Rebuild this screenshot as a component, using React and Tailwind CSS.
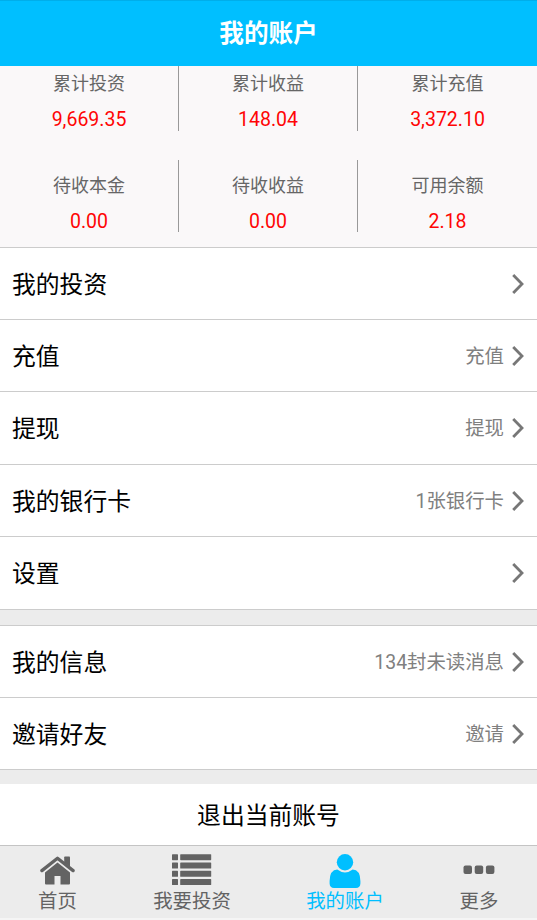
const stats = [
  [
    { label: '累计投资', value: '9,669.35' },
    { label: '累计收益', value: '148.04' },
    { label: '累计充值', value: '3,372.10' },
  ],
  [
    { label: '待收本金', value: '0.00' },
    { label: '待收收益', value: '0.00' },
    { label: '可用余额', value: '2.18' },
  ],
];

const Stat = ({ label, value, className }) => (
  <div className={`text-center border-[#999] ${className}`}>
    <div className="text-[18px] leading-6 text-[#666]">{label}</div>
    <div className="mt-3 text-[19.5px] leading-6 text-[#ff0505]">{value}</div>
  </div>
);

const Row = ({ title, note, className = 'h-[72px]' }) => (
  <a href="#" className={`flex items-center justify-between pl-3 pr-[13px] bg-white border-b border-[#ccc] ${className}`}>
    <span className="pt-0.5 text-[23.8px] leading-8 text-black">{title}</span>
    <span className="flex items-center text-[19.4px] leading-8 text-[#808080]">
      <span className="pt-0.5">{note}</span>
      <svg className="w-3 h-5 ml-2" viewBox="0 0 12 20" fill="none" stroke="#777" strokeWidth="2.8">
        <path d="M1.2 1L10 10l-8.8 9" />
      </svg>
    </span>
  </a>
);

const HomeIcon = () => (
  <svg className="w-9 h-[34px]" viewBox="0 0 36 34" fill="#636363">
    <path d="M24.200 3.300q0-.8.800-.8h4.200q.8 0 .8.800V13l-5.800-4.800z" />
    <path d="M1.900 16.600L17.500 4.200l15.600 12.400" fill="none" stroke="#636363" strokeWidth="3.300" strokeLinecap="round" strokeLinejoin="round" />
    <path d="M5 18.600L17.500 8.600 30 18.600V29.500q0 1-1 1h-8.500V22h-6v8.500H6q-1 0-1-1z" />
  </svg>
);

const ListIcon = () => (
  <svg className="w-10 h-[34px]" viewBox="0 0 40 34" fill="#636363">
    {[0.2, 8.500, 16.800, 25.100].map((y) => (
      <g key={y}>
        <rect x="0" y={y} width="6" height="6" rx="0.600" />
        <rect x="8.200" y={y} width="31" height="6" rx="0.600" />
      </g>
    ))}
  </svg>
);

const UserIcon = () => (
  <svg className="w-8 h-[34px]" viewBox="0 0 32 34" fill="#00bfff">
    <circle cx="16" cy="8.300" r="8.200" />
    <path d="M8.300 15.600Q.8 16 .6 27v2.600Q.8 34 5 34h22q4.200 0 4.400-4.400V27q-.2-11-7.700-11.400-3.700 2.900-7.700 2.900t-7.700-2.900z" />
  </svg>
);

const MoreIcon = () => (
  <svg className="w-8 h-[34px]" viewBox="0 0 32 34" fill="#636363">
    <rect x="0.500" y="11.500" width="8.500" height="8.500" rx="2" />
    <rect x="11.700" y="11.500" width="8.500" height="8.500" rx="2" />
    <rect x="22.900" y="11.500" width="8.500" height="8.500" rx="2" />
  </svg>
);

const tabs = [
  { label: '首页', icon: HomeIcon, width: 'w-[115px]' },
  { label: '我要投资', icon: ListIcon, width: 'w-[154px]' },
  { label: '我的账户', icon: UserIcon, width: 'w-[152px]', active: true },
  { label: '更多', icon: MoreIcon, width: 'w-[116px]' },
];

const App = () => {
  return (
    <div className="w-full h-[920px] flex flex-col overflow-hidden bg-[#ececec] font-[Roboto,'Noto_Sans_CJK_SC',sans-serif]">
      {/* Header */}
      <header className="h-[66px] shrink-0 flex items-center justify-center bg-[#00bfff] border-t border-[#00aeea]">
        <h1 className="text-[24.6px] leading-8 font-bold text-white">我的账户</h1>
      </header>

      {/* Account totals */}
      <section className="h-[182px] shrink-0 bg-[#faf8f9] border-b border-[#ccc]">
        <div className="grid grid-cols-3">
          {stats[0].map((s, i) => (
            <Stat key={s.label} {...s} className={i < 2 ? 'h-[65px] pt-1.5 border-r' : 'h-[65px] pt-1.5'} />
          ))}
        </div>
        <div className="grid grid-cols-3 mt-[29px]">
          {stats[1].map((s, i) => (
            <Stat key={s.label} {...s} className={i < 2 ? 'h-[72px] pt-3.5 border-r' : 'h-[72px] pt-3.5'} />
          ))}
        </div>
      </section>

      {/* Menu */}
      <nav className="shrink-0">
        <Row title="我的投资" />
        <Row title="充值" note="充值" />
        <Row title="提现" note="提现" className="h-[73px]" />
        <Row title="我的银行卡" note="1张银行卡" />
        <Row title="设置" className="h-[73px]" />
      </nav>
      <nav className="shrink-0 mt-[15px] border-t border-[#ccc]">
        <Row title="我的信息" note="134封未读消息" />
        <Row title="邀请好友" note="邀请" />
      </nav>

      <button className="h-[61px] shrink-0 mt-[14px] pt-0.5 bg-white text-[23.8px] leading-8 text-black">退出当前账号</button>

      {/* Tab bar */}
      <footer className="flex-1 flex border-t border-[#c4c4c4] border-b-2 border-b-[#f5f5f5]">
        {tabs.map(({ label, icon: Icon, width, active }) => (
          <a key={label} href="#" className={`${width} flex flex-col items-center pt-2 text-[19.4px] ${active ? 'text-[#00bfff]' : 'text-[#636363]'}`}>
            <Icon />
            <span className="mt-0.5 leading-6">{label}</span>
          </a>
        ))}
      </footer>
    </div>
  );
};

export default App;
